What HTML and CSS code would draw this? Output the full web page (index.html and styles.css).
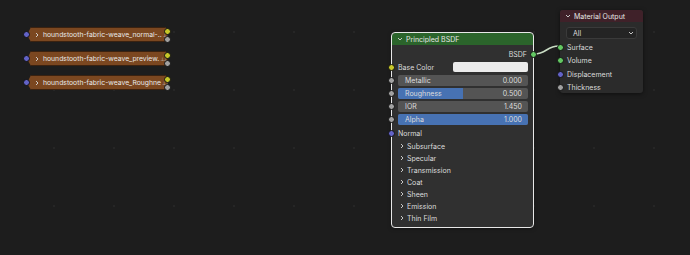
FILE: index.html
```html
<!DOCTYPE html>
<html lang="en">
<head>
    <meta charset="UTF-8">
    <title>Node Editor</title>
    <link rel="stylesheet" href="styles.css">
</head>
<body>
    <div class="canvas">
        <svg class="links" width="690" height="255">
            <path d="M534 54 C547 54 546 46 559 46" />
        </svg>

        <!-- image texture nodes, collapsed -->
        <div class="tex-node" style="left:27px; top:27px">
            <span class="socket sock-vec tex-in"></span>
            <div class="tex-body">
                <svg class="chev" width="6" height="6" viewBox="0 0 6 6"><path d="M2 1 L4 3 L2 5" /></svg>
                <span class="tex-name">houndstooth-fabric-weave_normal-..</span>
                <span class="tex-icon">⊥⊥</span>
            </div>
            <span class="socket sock-col tex-out1"></span>
            <span class="socket sock-val tex-out2"></span>
        </div>
        <div class="tex-node" style="left:27px; top:51px">
            <span class="socket sock-vec tex-in"></span>
            <div class="tex-body">
                <svg class="chev" width="6" height="6" viewBox="0 0 6 6"><path d="M2 1 L4 3 L2 5" /></svg>
                <span class="tex-name">houndstooth-fabric-weave_preview.</span>
                <span class="tex-icon">⊥⊥</span>
            </div>
            <span class="socket sock-col tex-out1"></span>
            <span class="socket sock-val tex-out2"></span>
        </div>
        <div class="tex-node" style="left:27px; top:75px">
            <span class="socket sock-vec tex-in"></span>
            <div class="tex-body">
                <svg class="chev" width="6" height="6" viewBox="0 0 6 6"><path d="M2 1 L4 3 L2 5" /></svg>
                <span class="tex-name">houndstooth-fabric-weave_Roughne</span>
                <span class="tex-icon">⊥⊥</span>
            </div>
            <span class="socket sock-col tex-out1"></span>
            <span class="socket sock-val tex-out2"></span>
        </div>

        <!-- principled bsdf -->
        <div class="node bsdf selected">
            <div class="node-header header-shader">
                <svg class="chev" width="6" height="6" viewBox="0 0 6 6"><path d="M1 2 L3 4 L5 2" /></svg>
                <span>Principled BSDF</span>
            </div>
            <div class="node-body">
                <div class="row row-out">
                    <span>BSDF</span>
                    <span class="socket sock-shader out"></span>
                </div>
                <div class="row row-color">
                    <span class="socket sock-col in"></span>
                    <span>Base Color</span>
                    <span class="swatch"></span>
                </div>
                <div class="row row-field">
                    <span class="socket sock-val in"></span>
                    <div class="field">
                        <span>Metallic</span><span>0.000</span>
                    </div>
                </div>
                <div class="row row-field">
                    <span class="socket sock-val in"></span>
                    <div class="field">
                        <span class="fill" style="width:50%"></span>
                        <span>Roughness</span><span>0.500</span>
                    </div>
                </div>
                <div class="row row-field">
                    <span class="socket sock-val in"></span>
                    <div class="field">
                        <span>IOR</span><span>1.450</span>
                    </div>
                </div>
                <div class="row row-field">
                    <span class="socket sock-val in"></span>
                    <div class="field">
                        <span class="fill" style="width:100%"></span>
                        <span>Alpha</span><span>1.000</span>
                    </div>
                </div>
                <div class="row row-normal">
                    <span class="socket sock-vec in"></span>
                    <span>Normal</span>
                </div>
                <div class="panel"><svg class="chev" width="6" height="6" viewBox="0 0 6 6"><path d="M2 1 L4 3 L2 5" /></svg>Subsurface</div>
                <div class="panel"><svg class="chev" width="6" height="6" viewBox="0 0 6 6"><path d="M2 1 L4 3 L2 5" /></svg>Specular</div>
                <div class="panel"><svg class="chev" width="6" height="6" viewBox="0 0 6 6"><path d="M2 1 L4 3 L2 5" /></svg>Transmission</div>
                <div class="panel"><svg class="chev" width="6" height="6" viewBox="0 0 6 6"><path d="M2 1 L4 3 L2 5" /></svg>Coat</div>
                <div class="panel"><svg class="chev" width="6" height="6" viewBox="0 0 6 6"><path d="M2 1 L4 3 L2 5" /></svg>Sheen</div>
                <div class="panel"><svg class="chev" width="6" height="6" viewBox="0 0 6 6"><path d="M2 1 L4 3 L2 5" /></svg>Emission</div>
                <div class="panel"><svg class="chev" width="6" height="6" viewBox="0 0 6 6"><path d="M2 1 L4 3 L2 5" /></svg>Thin Film</div>
            </div>
        </div>

        <!-- material output -->
        <div class="node output">
            <div class="node-header header-output">
                <svg class="chev" width="6" height="6" viewBox="0 0 6 6"><path d="M1 2 L3 4 L5 2" /></svg>
                <span>Material Output</span>
            </div>
            <div class="node-body">
                <div class="dropdown">
                    <span>All</span>
                    <svg width="6" height="6" viewBox="0 0 6 6"><path d="M1 2 L3 4 L5 2" /></svg>
                </div>
                <div class="row row-in"><span class="socket sock-shader in"></span>Surface</div>
                <div class="row row-in"><span class="socket sock-shader in"></span>Volume</div>
                <div class="row row-in"><span class="socket sock-vec in"></span>Displacement</div>
                <div class="row row-in"><span class="socket sock-val in"></span>Thickness</div>
            </div>
        </div>
    </div>
</body>
</html>
```

FILE: styles.css
```css
body {
    margin: 0;
    background-color: #1d1d1d;
    font-family: Inter, "DejaVu Sans", sans-serif;
    font-size: 7px;
    color: #dcdcdc;
}
.canvas {
    position: relative;
    width: 690px;
    height: 255px;
    overflow: hidden;
    background-color: #1d1d1d;
    background-image: radial-gradient(circle, #262626 0.8px, transparent 1px);
    background-size: 60px 58px;
    background-position: 24px 3px;
}
.links {
    position: absolute;
    left: 0;
    top: 0;
    z-index: 2;
    pointer-events: none;
}
.links path {
    fill: none;
    stroke: #c9dcc4;
    stroke-width: 1.6;
}
.chev path {
    fill: none;
    stroke: #d8d8d8;
    stroke-width: 0.9;
}

/* sockets */
.socket {
    position: absolute;
    width: 5px;
    height: 5px;
    border-radius: 50%;
    border: 0.7px solid #111;
    z-index: 3;
}
.sock-col { background-color: #c7c729; }
.sock-val { background-color: #a1a1a1; }
.sock-vec { background-color: #6363c7; }
.sock-shader { background-color: #63c763; }

/* collapsed texture nodes */
.tex-node {
    position: absolute;
    width: 141px;
    height: 15px;
}
.tex-body {
    height: 15px;
    display: flex;
    align-items: center;
    padding-left: 7px;
    background-color: #7b4720;
    clip-path: polygon(4px 0, 138px 0, 141px 3px, 141px 12px, 138px 15px, 4px 15px, 0 8px);
    box-shadow: inset 0 0 0 1px #3b2210;
}
.tex-body .chev {
    margin-right: 3px;
    flex-shrink: 0;
}
.tex-name {
    color: #e8e8e8;
    white-space: nowrap;
    font-size: 6.8px;
}
.tex-icon {
    color: #d0d0d0;
    font-size: 5px;
    letter-spacing: -1px;
    margin-left: 1px;
}
.tex-in { left: -4px; top: 4px; }
.tex-out1 { right: -3px; top: 1px; }
.tex-out2 { right: -3px; top: 9px; }

/* regular nodes */
.node {
    position: absolute;
    background-color: #303030;
    border-radius: 3px;
    box-shadow: 0 1px 4px rgba(0, 0, 0, 0.5);
}
.node.selected {
    outline: 1px solid #e8e8e8;
}
.node-header {
    height: 12px;
    display: flex;
    align-items: center;
    gap: 3px;
    padding-left: 5px;
    color: #e6e6e6;
    border-radius: 3px 3px 0 0;
}
.header-shader { background-color: #2b642b; }
.header-output { background-color: #3f2129; }

.bsdf {
    left: 392px;
    top: 33px;
    width: 141px;
    height: 194px;
}
.bsdf .node-body {
    padding: 3px 5px 0 6px;
}
.row {
    position: relative;
    display: flex;
    align-items: center;
}
.row .socket.in { left: -10px; }
.row .socket.out { right: -9px; }
.row-out {
    height: 12px;
    justify-content: flex-end;
    padding-right: 1px;
}
.row-color {
    height: 14px;
    justify-content: space-between;
}
.swatch {
    width: 75px;
    height: 10px;
    background-color: #ececec;
    border-radius: 2px;
}
.row-field {
    height: 13px;
}
.field {
    position: relative;
    flex: 1;
    height: 11px;
    display: flex;
    align-items: center;
    justify-content: space-between;
    padding: 0 6px 0 7px;
    background-color: #545454;
    border-radius: 2px;
    overflow: hidden;
}
.field span {
    position: relative;
}
.field .fill {
    position: absolute;
    left: 0;
    top: 0;
    bottom: 0;
    background-color: #4772b3;
}
.row-normal {
    height: 14px;
}
.panel {
    height: 12px;
    display: flex;
    align-items: center;
    gap: 2px;
    padding-left: 1px;
}

.output {
    left: 560px;
    top: 10px;
    width: 83px;
    height: 83px;
    background-color: #2b2b2b;
}
.output .node-body {
    padding: 5px 6px 0 6px;
}
.dropdown {
    height: 10px;
    display: flex;
    align-items: center;
    justify-content: space-between;
    padding: 0 2px 0 6px;
    background-color: #242424;
    border: 1px solid #3a3a3a;
    border-radius: 3px;
    margin-bottom: 2px;
}
.dropdown path {
    fill: none;
    stroke: #d8d8d8;
    stroke-width: 0.9;
}
.row-in {
    height: 13.3px;
    padding-left: 1px;
}
.output .row .socket.in { left: -9px; }
```
